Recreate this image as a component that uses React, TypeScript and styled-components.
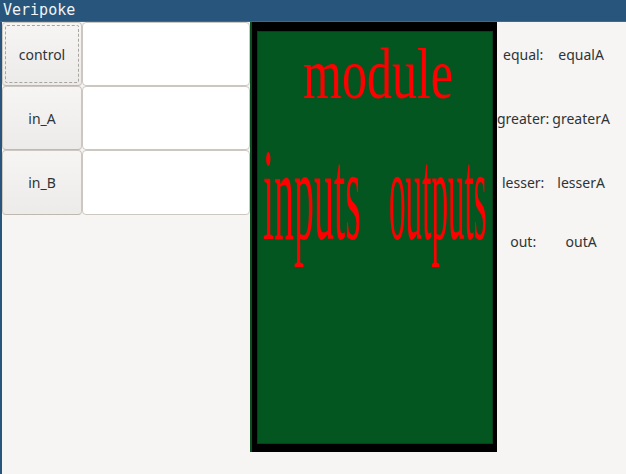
import React from "react";
import styled, { createGlobalStyle } from "styled-components";

const Global = createGlobalStyle`
  html, body { margin: 0; padding: 0; }
  body { background: #f6f5f4; overflow: hidden; }
  #root { height: 100vh; }
`;

const Window = styled.div`
  height: 474px;
  display: flex;
  flex-direction: column;
  background: #f6f5f4;
`;

const TitleBar = styled.div`
  height: 21px;
  flex: none;
  background: #28557b;
  border-bottom: 1px solid #3d6a8f;
  color: #f2f4f7;
  font-family: "DejaVu Sans Mono", monospace;
  font-size: 15px;
  line-height: 21px;
  padding-left: 3px;
`;

const Content = styled.div`
  flex: 1;
  display: flex;
  align-items: flex-start;
  border-left: 2px solid #28557b;
`;

const LeftGrid = styled.div`
  display: grid;
  grid-template-columns: 80px 168px;
  grid-template-rows: 64px 64px 65px;
`;

const Button = styled.div<{ $focus?: boolean }>`
  position: relative;
  box-sizing: border-box;
  border: 1px solid #cdc7c2;
  border-bottom-color: #bfb8b1;
  border-radius: 4px;
  background: linear-gradient(#f6f5f4, #edebe9);
  display: flex;
  align-items: center;
  justify-content: center;
  font-family: "Noto Sans", sans-serif;
  font-size: 14px;
  color: #2e3436;
  ${(p) =>
    p.$focus &&
    `&::after {
      content: "";
      position: absolute;
      inset: 2px;
      border: 1px dashed #a8a4a0;
      border-radius: 2px;
    }`}
`;

const Entry = styled.div`
  box-sizing: border-box;
  border: 1px solid #cdc7c2;
  border-radius: 4px;
  background: #ffffff;
`;

const Canvas = styled.div`
  width: 247px;
  height: 430px;
  box-sizing: border-box;
  flex: none;
  background: #000000;
  border-left: 2px solid #0a4f1f;
  padding: 9px 4px 8px 5px;
  display: flex;
`;

const Board = styled.div`
  position: relative;
  flex: 1;
  box-sizing: border-box;
  background: #03561f;
  border: 1px solid #0b3f1b;
  overflow: hidden;
`;

const Word = styled.span<{ $size: number; $x: number; $baseline: number; $sx: number; $sy: number }>`
  position: absolute;
  left: ${(p) => p.$x}px;
  top: ${(p) => p.$baseline - p.$size * 0.8375}px;
  font-family: "Liberation Serif", serif;
  font-size: ${(p) => p.$size}px;
  line-height: 1;
  color: #ff0000;
  white-space: nowrap;
  transform-origin: 0 ${(p) => p.$size * 0.8375}px;
  transform: scale(${(p) => p.$sx}, ${(p) => p.$sy});
`;

const RightGrid = styled.div`
  display: grid;
  grid-template-columns: auto auto;
  grid-template-rows: 64px 64px 65px 52px;
  column-gap: 3px;
  font-family: "Noto Sans", sans-serif;
  font-size: 14px;
  color: #2e3436;
`;

const Cell = styled.div`
  display: flex;
  align-items: center;
  justify-content: center;
  white-space: nowrap;
`;

const inputs = ["control", "in_A", "in_B"];
const outputs: [string, string][] = [
  ["equal:", "equalA"],
  ["greater:", "greaterA"],
  ["lesser:", "lesserA"],
  ["out:", "outA"],
];

export default function App() {
  return (
    <>
      <Global />
      <Window>
        <TitleBar>Veripoke</TitleBar>
        <Content>
          <LeftGrid>
            {inputs.map((name, i) => (
              <React.Fragment key={name}>
                <Button $focus={i === 0}>{name}</Button>
                <Entry />
              </React.Fragment>
            ))}
          </LeftGrid>
          <Canvas>
            <Board>
              <Word $size={50} $x={45} $baseline={66} $sx={1} $sy={1.42}>
                module
              </Word>
              <Word $size={40} $x={5} $baseline={208} $sx={1} $sy={3.26}>
                inputs
              </Word>
              <Word $size={40} $x={131} $baseline={208} $sx={0.83} $sy={3.26}>
                outputs
              </Word>
            </Board>
          </Canvas>
          <RightGrid>
            {outputs.map(([label, value]) => (
              <React.Fragment key={label}>
                <Cell>{label}</Cell>
                <Cell>{value}</Cell>
              </React.Fragment>
            ))}
          </RightGrid>
        </Content>
      </Window>
    </>
  );
}
